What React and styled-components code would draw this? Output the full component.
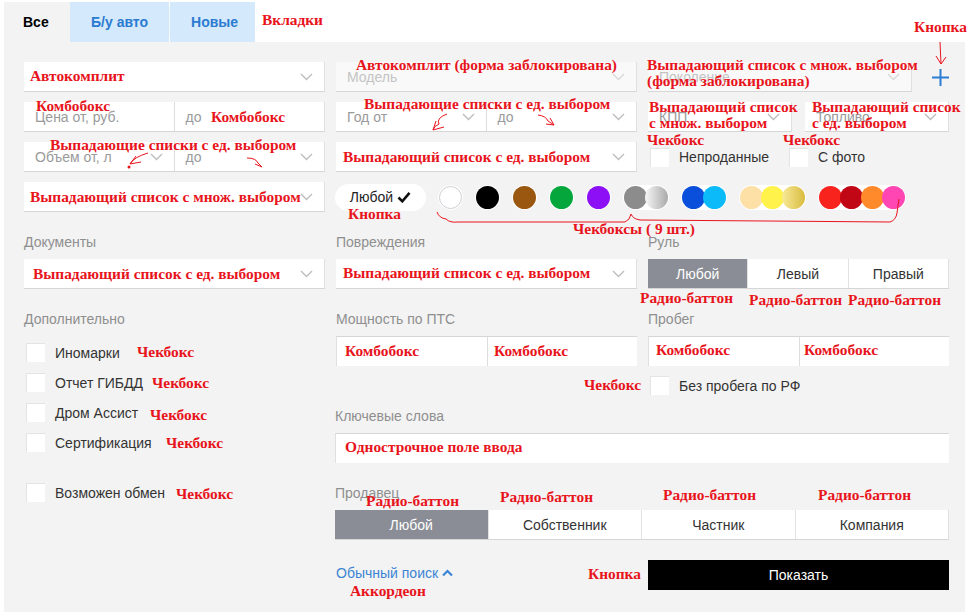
import React from "react";
import styled, { createGlobalStyle } from "styled-components";

const GlobalStyle = createGlobalStyle`
  body {
    margin: 0;
    background: #fff;
    font-family: "Liberation Sans", Arial, sans-serif;
  }
`;

const Page = styled.div`
  position: relative;
  width: 969px;
  height: 616px;
  overflow: hidden;
  background: #fff;
`;

const Wrap = styled.div`
  margin-left: 4px;
  width: 961px;
  padding-top: 2px;
`;

const Tabs = styled.div`
  display: flex;
  height: 40px;
`;

const Tab = styled.div`
  display: flex;
  align-items: center;
  padding: ${(p) => (p.$active ? "0 0 0 19px" : p.$pad || "0 21px")};
  width: ${(p) => (p.$active ? "66px" : "auto")};
  box-sizing: border-box;
  background: ${(p) => (p.$active ? "#f3f3f3" : "#d4e9fb")};
  color: ${(p) => (p.$active ? "#000" : "#2b7bd1")};
  font-size: 14px;
  font-weight: 700;
`;

const TabDivider = styled.div`
  width: 1px;
  height: 30px;
  align-self: center;
  background: #f2f8fe;
`;

const Panel = styled.div`
  background: #f3f3f3;
  padding: 20px 16px 22px 20px;
`;

const Grid = styled.div`
  display: grid;
  grid-template-columns: 301px 301px 301px;
  column-gap: 11px;
  row-gap: 10px;
`;

const Section = styled.div`
  display: grid;
  grid-template-columns: 301px 301px 301px;
  column-gap: 11px;
  margin-top: 22px;
`;

const Col = styled.div`
  display: flex;
  flex-direction: column;
  grid-column: ${(p) => p.$span || "auto"};
`;

const Label = styled.div`
  height: 17px;
  line-height: 17px;
  font-size: 14px;
  color: #8f8f8f;
  margin-bottom: 8px;
`;

const Field = styled.div`
  display: flex;
  align-items: center;
  height: 30px;
  box-sizing: border-box;
  background: ${(p) => (p.$disabled ? "#f9f9f9" : "#fff")};
  border-bottom: 1px solid #d6d6d6;
  border-right: 1px solid #e0e0e0;
  flex: ${(p) => p.$flex || "1"};
  min-width: 0;
`;

const InputBox = styled.div`
  display: flex;
  height: 30px;
  box-sizing: border-box;
  background: #fff;
  border-top: 1px solid #d6d6d6;
  border-left: 1px solid #e0e0e0;
`;

const Part = styled.div`
  flex: 1;
  display: flex;
  align-items: center;
  height: 100%;
  padding: 0 11px;
  box-sizing: border-box;
  border-left: ${(p) => (p.$divided ? "1px solid #dddddd" : "none")};
  color: ${(p) => (p.$disabled ? "#c4c4c4" : "#9a9a9a")};
  font-size: 14px;
  white-space: nowrap;
`;

const PartText = styled.span`
  flex: 1;
`;

const Row = styled.div`
  display: flex;
  align-items: center;
  gap: ${(p) => p.$gap || "0"};
  height: 30px;
`;

const Chevron = ({ dim }) => (
  <svg width="13" height="8" viewBox="0 0 13 8">
    <polyline
      points="1,1 6.5,6.5 12,1"
      fill="none"
      stroke={dim ? "#d8d8d8" : "#bdbdbd"}
      strokeWidth="1.4"
    />
  </svg>
);

const PlusButton = styled.button`
  border: none;
  background: none;
  padding: 0;
  margin-left: auto;
  width: 18px;
  height: 18px;
  display: flex;
  align-items: center;
  justify-content: center;
`;

const Check = styled.label`
  display: flex;
  align-items: center;
  gap: 10px;
  font-size: 14px;
  color: #333;
  margin-left: 2px;
  margin-top: ${(p) => p.$mt || "0"};
  height: 19px;
`;

const Box = styled.span`
  width: 18px;
  height: 18px;
  background: #fff;
  border-top: 1px solid #e4e4e4;
  border-left: 1px solid #e4e4e4;
  flex: none;
`;

const CheckList = styled.div`
  display: flex;
  flex-direction: column;
  gap: 11px;
  padding-top: 7px;
`;

const ColorRow = styled.div`
  display: flex;
  align-items: center;
  gap: 12px;
  height: 30px;
`;

const AnyPill = styled.button`
  display: flex;
  align-items: center;
  justify-content: center;
  gap: 4px;
  width: 91px;
  height: 27px;
  border: none;
  border-radius: 14px;
  background: #fff;
  font-family: inherit;
  font-size: 14px;
  color: #222;
  margin-left: -1px;
`;

const Swatch = styled.div`
  display: flex;
  padding: 1px;
  border-radius: 14px;
  background: #fff;
`;

const Dot = styled.span`
  width: 23px;
  height: 23px;
  border-radius: 50%;
  box-sizing: border-box;
  background: ${(p) => p.$c};
  border: ${(p) => (p.$ring ? "1px solid #cbcfd4" : "none")};
  & + & {
    margin-left: -2px;
  }
`;

const Segments = styled.div`
  display: flex;
  height: 30px;
  background: #fff;
  border-bottom: 1px solid #d6d6d6;
  border-right: 1px solid #e0e0e0;
  box-sizing: border-box;
`;

const Segment = styled.div`
  flex: 1;
  display: flex;
  align-items: center;
  justify-content: center;
  font-size: 14px;
  background: ${(p) => (p.$active ? "#8a8d95" : "#fff")};
  color: ${(p) => (p.$active ? "#fff" : "#333")};
  & + & {
    border-left: 1px solid #e2e2e2;
  }
`;

const Lower = styled.div`
  display: grid;
  grid-template-columns: 301px 613px;
  column-gap: 11px;
  margin-top: 22px;
`;

const RightArea = styled.div`
  display: grid;
  grid-template-columns: 301px 301px;
  column-gap: 11px;
  align-content: start;
`;

const Block = styled.div`
  grid-column: ${(p) => p.$span || "auto"};
  margin-top: ${(p) => p.$mt || "0"};
  margin-left: ${(p) => p.$ml || "0"};
`;

const Accordion = styled.button`
  display: flex;
  align-items: center;
  gap: 4px;
  border: none;
  background: none;
  padding: 0;
  height: 26px;
  font-family: inherit;
  font-size: 14px;
  color: #3b84d4;
`;

const ShowButton = styled.button`
  width: 100%;
  height: 30px;
  border: none;
  background: #000;
  color: #fff;
  font-family: inherit;
  font-size: 14px;
`;

const Note = styled.span`
  position: absolute;
  left: ${(p) => p.$x}px;
  top: ${(p) => p.$y - 9}px;
  font-family: "Liberation Serif", "Times New Roman", serif;
  font-weight: 700;
  font-size: 15.4px;
  line-height: 17px;
  color: #e8141c;
  white-space: nowrap;
  pointer-events: none;
`;

const Strokes = styled.svg`
  position: absolute;
  left: 0;
  top: 0;
  pointer-events: none;
`;

const SplitField = ({ a, b, chev, disabled }) => (
  <Field $disabled={disabled}>
    <Part>
      <PartText>{a}</PartText>
      {chev && <Chevron />}
    </Part>
    <Part $divided>
      <PartText>{b}</PartText>
      {chev && <Chevron />}
    </Part>
  </Field>
);

const Select = ({ text, disabled, flex }) => (
  <Field $disabled={disabled} $flex={flex}>
    <Part $disabled={disabled}>
      <PartText>{text}</PartText>
      <Chevron dim={disabled} />
    </Part>
  </Field>
);

const Pair = () => (
  <InputBox>
    <Part />
    <Part $divided />
  </InputBox>
);

const swatches = [
  [{ c: "#fff", ring: true }],
  [{ c: "#000" }],
  [{ c: "#9a5710" }],
  [{ c: "#05a63c" }],
  [{ c: "#8d0ff5" }],
  [{ c: "#8c8c8c" }, { c: "linear-gradient(to right, #f7f7f7, #a9a9a9)" }],
  [{ c: "#0a4edc" }, { c: "#0bbaf8" }],
  [{ c: "#fde0a5" }, { c: "#fff24b" }, { c: "linear-gradient(to right, #f8ea98, #d9bb3f)" }],
  [{ c: "#f8231d" }, { c: "#c10616" }, { c: "#ff8a2c" }, { c: "#ff46b2" }],
];

const notes = [
  ["Вкладки", 262, 20],
  ["Кнопка", 914, 27],
  ["Автокомплит", 30, 76],
  ["Комбобокс", 36, 106],
  ["Комбобокс", 211, 117],
  ["Автокомплит (форма заблокирована)", 356, 65],
  ["Выпадающий список с множ. выбором", 647, 65],
  ["(форма заблокирована)", 647, 81],
  ["Выпадающие списки с ед. выбором", 364, 104],
  ["Выпадающий список", 649, 107],
  ["с множ. выбором", 649, 123],
  ["Выпадающий список", 812, 107],
  ["с ед. выбором", 812, 123],
  ["Чекбокс", 647, 140],
  ["Чекбокс", 783, 140],
  ["Выпадающие списки с ед. выбором", 50, 145],
  ["Выпадающий список с ед. выбором", 343, 157],
  ["Выпадающий список с множ. выбором", 30, 197],
  ["Кнопка", 348, 214],
  ["Чекбоксы ( 9 шт.)", 573, 229],
  ["Выпадающий список с ед. выбором", 33, 274],
  ["Выпадающий список с ед. выбором", 343, 273],
  ["Радио-баттон", 640, 298],
  ["Радио-баттон", 749, 300],
  ["Радио-баттон", 848, 300],
  ["Чекбокс", 137, 352],
  ["Чекбокс", 152, 383],
  ["Чекбокс", 150, 415],
  ["Чекбокс", 166, 443],
  ["Чекбокс", 176, 494],
  ["Комбобокс", 345, 351],
  ["Комбобокс", 494, 351],
  ["Комбобокс", 656, 350],
  ["Комбобокс", 804, 350],
  ["Чекбокс", 584, 385],
  ["Однострочное поле ввода", 345, 447],
  ["Радио-баттон", 366, 501],
  ["Радио-баттон", 500, 497],
  ["Радио-баттон", 663, 495],
  ["Радио-баттон", 818, 495],
  ["Кнопка", 588, 574],
  ["Аккордеон", 350, 591],
];

export default function App() {
  return (
    <Page>
      <GlobalStyle />
      <Wrap>
        <Tabs>
          <Tab $active>Все</Tab>
          <Tab>Б/у авто</Tab>
          <TabDivider />
          <Tab $pad="0 17px 0 21px">Новые</Tab>
        </Tabs>
        <Panel>
          <Grid>
            <Select text="" />
            <Select text="Модель" disabled />
            <Row>
              <Select text="Поколение" disabled flex="0 0 264px" />
              <PlusButton>
                <svg width="17" height="17" viewBox="0 0 17 17">
                  <path d="M8.5 0v17M0 8.5h17" stroke="#2a7fd4" strokeWidth="2" />
                </svg>
              </PlusButton>
            </Row>

            <SplitField a="Цена от, руб." b="до" />
            <SplitField a="Год от" b="до" chev />
            <Row $gap="13px">
              <Select text="КПП" />
              <Select text="Топливо" />
            </Row>

            <SplitField a="Объем от, л" b="до" chev />
            <Select text="" />
            <Row $gap="18px">
              <Check>
                <Box />
                Непроданные
              </Check>
              <Check>
                <Box />С фото
              </Check>
            </Row>

            <Select text="" />
            <Col $span="2 / span 2">
              <ColorRow>
                <AnyPill>
                  Любой
                  <svg width="14" height="12" viewBox="0 0 14 12">
                    <path d="M1.5 6.5l3.8 3.8L12.5 1.8" fill="none" stroke="#111" strokeWidth="2.6" />
                  </svg>
                </AnyPill>
                {swatches.map((s, i) => (
                  <Swatch key={i}>
                    {s.map((d, j) => (
                      <Dot key={j} $c={d.c} $ring={d.ring} />
                    ))}
                  </Swatch>
                ))}
              </ColorRow>
            </Col>
          </Grid>

          <Section>
            <Col>
              <Label>Документы</Label>
              <Select text="" />
            </Col>
            <Col>
              <Label>Повреждения</Label>
              <Select text="" />
            </Col>
            <Col>
              <Label>Руль</Label>
              <Segments>
                <Segment $active>Любой</Segment>
                <Segment>Левый</Segment>
                <Segment>Правый</Segment>
              </Segments>
            </Col>
          </Section>

          <Lower>
            <Col>
              <Label>Дополнительно</Label>
              <CheckList>
                <Check>
                  <Box />
                  Иномарки
                </Check>
                <Check>
                  <Box />
                  Отчет ГИБДД
                </Check>
                <Check>
                  <Box />
                  Дром Ассист
                </Check>
                <Check>
                  <Box />
                  Сертификация
                </Check>
                <Check $mt="20px">
                  <Box />
                  Возможен обмен
                </Check>
              </CheckList>
            </Col>
            <RightArea>
              <Col>
                <Label>Мощность по ПТС</Label>
                <Pair />
              </Col>
              <Col>
                <Label>Пробег</Label>
                <Pair />
              </Col>
              <Block $span="2" $mt="10px">
                <Check>
                  <Box />
                  Без пробега по РФ
                </Check>
              </Block>
              <Block $span="1 / span 2" $mt="13px" $ml="-1px">
                <Label>Ключевые слова</Label>
                <InputBox />
              </Block>
              <Block $span="1 / span 2" $mt="22px" $ml="-1px">
                <Label>Продавец</Label>
                <Segments>
                  <Segment $active>Любой</Segment>
                  <Segment>Собственник</Segment>
                  <Segment>Частник</Segment>
                  <Segment>Компания</Segment>
                </Segments>
              </Block>
              <Block $mt="20px">
                <Accordion>
                  Обычный поиск
                  <svg width="11" height="8" viewBox="0 0 11 8">
                    <polyline points="1,6.5 5.5,2 10,6.5" fill="none" stroke="#3b84d4" strokeWidth="2.2" />
                  </svg>
                </Accordion>
              </Block>
              <Block $mt="20px">
                <ShowButton>Показать</ShowButton>
              </Block>
            </RightArea>
          </Lower>
        </Panel>
      </Wrap>

      {notes.map(([t, x, y], i) => (
        <Note key={i} $x={x} $y={y}>
          {t}
        </Note>
      ))}

      <Strokes width="969" height="616" viewBox="0 0 969 616">
        <g fill="none" stroke="#e8141c" strokeWidth="1">
          <path d="M940 42 L941 64 M936 56 L941 64 L946 57" />
          <path d="M447 114 Q436 118 439 124 Q434 126 433 130 M433 130 L444 127 M433 130 L436 121" />
          <path d="M538 115 Q546 116 548 121 L554 125 M554 125 L546 124 M554 125 L550 118" />
          <path d="M148 153 Q134 157 130 164 M130 164 L141 162 M130 164 L136 156" />
          <path d="M247 158 Q256 158 258 163 L262 167 M262 167 L255 164" />
          <path d="M437 212 Q439 218 446 219 Q450 223 458 222 L625 222 Q630 220 631 214 Q633 219 640 220 L890 222 Q896 220 897 213 L899 199" />
        </g>
        <circle cx="129" cy="167" r="1.5" fill="#e8141c" />
      </Strokes>
    </Page>
  );
}
